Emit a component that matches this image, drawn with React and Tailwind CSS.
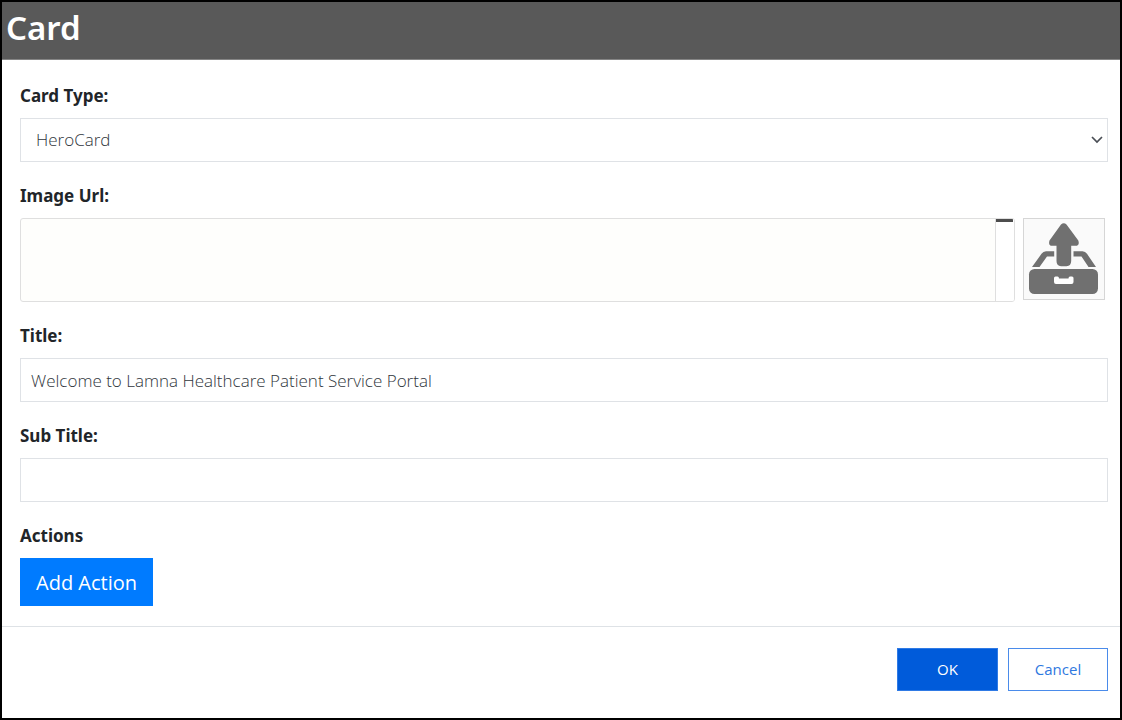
import { useState } from "react";

const control =
  "block h-11 w-full border border-[#dfe2e6] bg-white text-[17px] leading-6 font-light text-[#30363c] outline-none";

function Field({ id, label, children }) {
  return (
    <div className="flex flex-col gap-2.5">
      <label htmlFor={id} className="font-['Noto_Sans',sans-serif] text-[17px] leading-6 font-bold text-[#212529]">
        {label}
      </label>
      {children}
    </div>
  );
}

function UploadIcon() {
  return (
    <svg viewBox="0 0 80 80" className="h-full w-full" aria-hidden="true">
      <g fill="#707070">
        <path d="M37 5.500Q39.800 3 42.500 5.500L54.300 21.500Q56 26.500 51.500 26.800H47.200V42Q47 47.200 42.500 47.200H37Q32.500 47 32.500 42V26.800H28Q24 26.500 25.500 21.500Z" />
        <path d="M30.200 32.200V37.500H23L15.500 48H8L17.500 34.800Q19.200 32.200 22 32.200Z" />
        <path d="M49.500 32.200V37.500H57.500L64.500 48H72L63 34.800Q61.300 32.200 58.500 32.200Z" />
        <rect x="5" y="50" width="69" height="25" rx="5.500" />
      </g>
      <path d="M31.500 57.500H33.500Q35 57.500 35 59.500H44.500Q44.500 57.500 46 57.500H48Q49.500 57.500 49.500 59V63Q49.500 65 47.500 65H32Q30 65 30 63V59Q30 57.500 31.500 57.500Z" fill="#fff" />
    </svg>
  );
}

export default function App() {
  const [type, setType] = useState("HeroCard");
  const [url, setUrl] = useState("");
  const [title, setTitle] = useState("Welcome to Lamna Healthcare Patient Service Portal");
  const [subTitle, setSubTitle] = useState("");

  return (
    <form
      onSubmit={(e) => e.preventDefault()}
      className="flex min-h-screen flex-col border-2 border-black bg-white font-['Open_Sans','Noto_Sans',sans-serif]"
    >
      <header className="border-b border-[#858585] bg-[#595959] px-1 pt-[3px] pb-[9px]">
        <h1 className="font-['Noto_Sans',sans-serif] text-[33px] leading-[45px] font-semibold text-white">Card</h1>
      </header>

      <main className="flex flex-col gap-[22px] border-b border-[#dee2e6] pt-6 pr-3 pb-5 pl-[18px]">
        <Field id="card-type" label="Card Type:">
          <div className="relative">
            <select
              id="card-type"
              value={type}
              onChange={(e) => setType(e.target.value)}
              className={`${control} appearance-none pr-8 pl-[15px]`}
            >
              <option>HeroCard</option>
              <option>ThumbnailCard</option>
            </select>
            <svg
              viewBox="0 0 12 8"
              className="pointer-events-none absolute top-[18px] right-[5px] h-2 w-3"
              fill="none"
              stroke="#4a4e55"
              strokeWidth="1.700"
              aria-hidden="true"
            >
              <path d="M1 1L6 6L11 1" />
            </svg>
          </div>
        </Field>

        <Field id="image-url" label="Image Url:">
          <div className="flex items-start gap-2 pr-[3px]">
            <div className="flex h-[84px] grow overflow-hidden rounded-[3px] border border-[#dfdfdf] bg-[#fefefc]">
              <textarea
                id="image-url"
                value={url}
                onChange={(e) => setUrl(e.target.value)}
                className="h-full grow resize-none overflow-hidden px-2.5 py-2 text-[17px] leading-6 font-light text-[#30363c] outline-none"
              />
              <div className="w-[19px] border-l border-[#dfdfdf] bg-white">
                <div className="h-[3px] w-[17px] bg-[#4d4d4d]" />
              </div>
            </div>
            <button
              type="button"
              aria-label="Upload image"
              className="h-[82px] w-[82px] shrink-0 border border-[#d6d6d6] bg-[#fafafa]"
            >
              <UploadIcon />
            </button>
          </div>
        </Field>

        <Field id="title" label="Title:">
          <input
            id="title"
            type="text"
            value={title}
            onChange={(e) => setTitle(e.target.value)}
            className={`${control} px-2.5`}
          />
        </Field>

        <Field id="sub-title" label="Sub Title:">
          <input
            id="sub-title"
            type="text"
            value={subTitle}
            onChange={(e) => setSubTitle(e.target.value)}
            className={`${control} px-2.5`}
          />
        </Field>

        <section className="flex flex-col items-start gap-2.5">
          <h2 className="font-['Noto_Sans',sans-serif] text-[17px] leading-6 font-bold text-[#212529]">Actions</h2>
          <button type="button" className="h-12 bg-[#007bff] px-4 pt-0.5 text-[20px] leading-6 text-white">
            Add Action
          </button>
        </section>
      </main>

      <footer className="flex justify-end gap-2.5 py-[21px] pr-3">
        <button type="submit" className="h-[43px] w-[101px] border border-[#2f7ae5] bg-[#005bda] text-[15px] text-white">
          OK
        </button>
        <button type="button" className="h-[43px] w-[100px] border border-[#4a8bea] bg-white text-[15px] text-[#2f78e0]">
          Cancel
        </button>
      </footer>
    </form>
  );
}
